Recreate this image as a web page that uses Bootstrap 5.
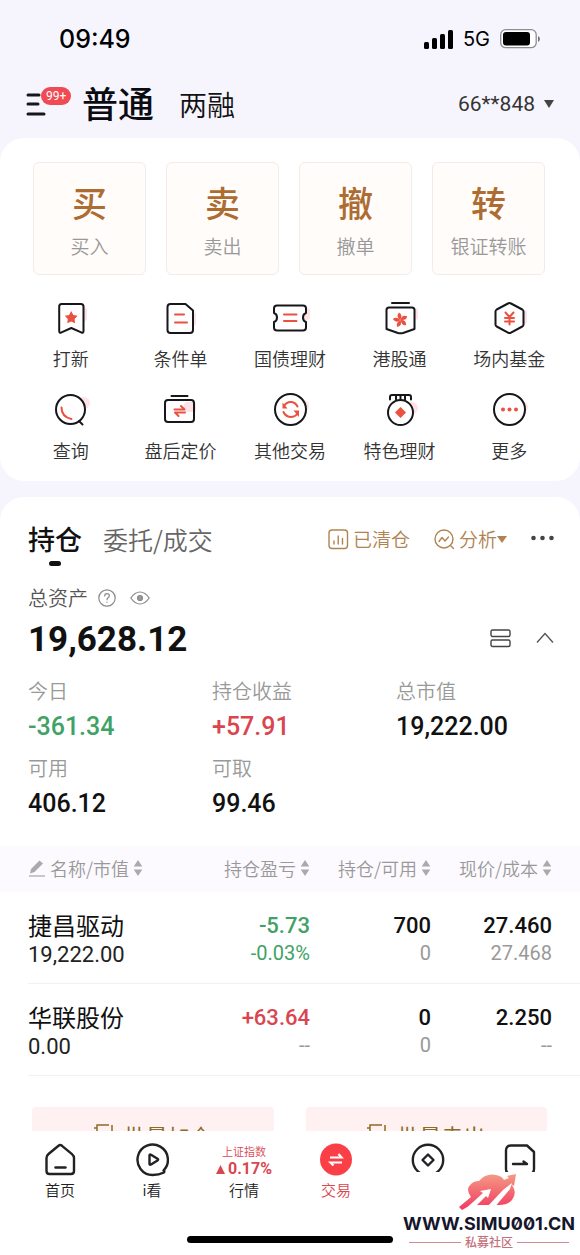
<!DOCTYPE html>
<html lang="zh-CN">
<head>
<meta charset="utf-8">
<meta name="viewport" content="width=device-width, initial-scale=1">
<title>交易</title>
<link href="https://cdn.jsdelivr.net/npm/bootstrap@5.3.0/dist/css/bootstrap.min.css" rel="stylesheet">
<style>
  :root { --cjk: "Noto Sans CJK SC", sans-serif; --num: Roboto, "Noto Sans CJK SC", sans-serif; }
  body { font-family: var(--cjk); font-weight: 350; color: #111; background: #f6f5fe; }
  button, a { color: inherit; text-decoration: none; }
  button { background: none; border: 0; padding: 0; font-weight: inherit; }
  svg { display: block; flex: none; }
  .num { font-family: var(--num); font-weight: 500; }
  .up { color: #d9464f; }
  .down { color: #3fa266; }
  .faint { color: #999; }
  .gold { color: #b08452; }

  /* status bar and account switcher */
  .status { height: 78px; padding: 0 40px 0 59px; font-family: Inter, sans-serif; font-weight: 500; color: #000; }
  .clock { font-size: 25px; line-height: 32px; }
  .net { font-size: 20px; line-height: 32px; font-weight: 400; margin: 0 10px 0 9px; }
  .switcher { height: 60px; padding: 0 26px 8px; }
  .menu { width: 46px; height: 26px; }
  .menu path { stroke-width: 3; }
  .count { top: -4px; left: 15px; height: 18px; line-height: 18px; font-family: Roboto, sans-serif; font-size: 12px; font-weight: 400; padding: 0 5px; border-radius: 9px; background: #f04a54; color: #fff; }
  .mode-on { font-size: 36px; line-height: 44px; font-weight: 500; margin-left: 10px; padding-bottom: 4px; color: #0b0b12; }
  .mode-off { font-size: 28px; line-height: 48px; font-weight: 350; margin-left: 25px; }
  .account { font-size: 21px; line-height: 28px; font-weight: 400; color: #333; gap: 9px; }

  /* shortcuts */
  .panel { background: #fff; border-radius: 24px; }
  .shortcuts { padding: 24px 0 15px; }
  .tiles { display: grid; grid-template-columns: repeat(4, 1fr); gap: 20px; padding: 0 35px 0 33px; }
  .tile { height: 113px; border: 1px solid #f1ece9; border-radius: 6px; background: #fffcfa; }
  .tile-mark { font-size: 35px; line-height: 48px; font-weight: 500; color: #ad6c32; padding-bottom: 6px; }
  .tile-name { font-size: 19px; line-height: 28px; color: #999; }
  .tools { display: grid; grid-template-columns: repeat(5, 1fr); row-gap: 18px; padding: 25px 16px 0; }
  .tool { font-size: 18px; line-height: 26px; color: #333; gap: 7px; height: 74px; white-space: nowrap; }
  .ink { fill: #fff; stroke: #17171b; stroke-width: 2; stroke-linejoin: round; stroke-linecap: round; }
  .line { fill: none; stroke: #17171b; stroke-width: 2; stroke-linejoin: round; stroke-linecap: round; }
  .hot { fill: none; stroke: #ea5140; stroke-width: 2; stroke-linecap: round; stroke-linejoin: round; }
  .hotfill { fill: #ea5140; }
  .glow { fill: #fde3e6; }

  /* holdings */
  .holdings { margin-top: 16px; padding-top: 22px; border-radius: 24px 24px 0 0; }
  .pad { padding-left: 28px; padding-right: 25px; }
  .tab-on { font-size: 27px; line-height: 40px; font-weight: 500; }
  .tab-on::after { content: ""; display: block; width: 12px; height: 5px; margin: 2px auto 0; border-radius: 3px; background: #111; }
  .tab-off { font-size: 25px; line-height: 40px; color: #666; margin-left: 21px; }
  .act { font-size: 19px; line-height: 40px; gap: 4px; }
  .total-label { font-size: 20px; line-height: 28px; margin-top: 18px; color: #555; gap: 10px; }
  .total { font-size: 35px; line-height: 40px; font-weight: 700; }
  .fold { padding-bottom: 5px; }
  .metrics { display: grid; grid-template-columns: repeat(3, 1fr); row-gap: 9px; margin: 17px 0 24px; padding-left: 28px; }
  .metrics dt { font-size: 20px; line-height: 28px; font-weight: 350; color: #999; }
  .metrics dd { font-size: 25px; line-height: 36px; margin: 4px 0 0; }
  .book { table-layout: fixed; }
  .book thead { background: #fcf9ff; }
  .book th { height: 46px; padding: 0 0 2px; font-size: 18px; line-height: 26px; font-weight: 350; color: #999; white-space: nowrap; }
  .book td { padding: 20px 0 13px; vertical-align: top; text-align: right; border-bottom: 1px solid #f1f1f3; }
  .book .edge { width: 28px; border: 0; }
  .book .rim { width: 28px; }
  .book .c-pl { width: 126px; }
  .book .c-qty { width: 121px; }
  .name { font-size: 24px; line-height: 26px; font-weight: 400; margin-bottom: 2px; }
  .worth { font-size: 22px; line-height: 30px; font-weight: 400; color: #222; }
  .main-v { font-size: 22px; line-height: 28px; }
  .sub-v { font-size: 20px; line-height: 26px; font-weight: 400; }
  .bulk { display: grid; grid-template-columns: 1fr 1fr; gap: 32px; padding: 31px 33px 0 32px; }
  .bulk button { height: 64px; font-size: 22px; line-height: 30px; font-weight: 400; border-radius: 4px; background: #fff0f2; color: #8c6b26; gap: 10px; padding-bottom: 8px; }

  /* bottom bar */
  .dock { background: #fff; padding: 12px 14px; height: 124px; }
  .dock-item { flex: 1 1 0; font-size: 15px; line-height: 20px; color: #222; gap: 3px; }
  .dock-item.up { color: #d9464f; }
  .index { height: 34px; }
  .index-name { font-size: 11px; line-height: 16px; }
  .index-move { font-size: 16px; line-height: 20px; font-weight: 700; gap: 3px; }
  .d { fill: none; stroke: #222226; stroke-width: 2.4; stroke-linejoin: round; stroke-linecap: round; }
  .homebar { width: 206px; height: 7px; border-radius: 4px; background: #000; margin: 36px auto 0; }
  .stamp { right: 0; bottom: 0; width: 182px; height: 83px; background: #fff; }
  .stamp-url { font-family: Inter, sans-serif; font-weight: 700; font-size: 18px; line-height: 20px; color: #15152c; font-variant-numeric: slashed-zero; }
  .stamp-sub { font-size: 12px; line-height: 16px; font-weight: 500; color: #c4717c; gap: 4px; width: 160px; }
  .stamp-sub::before, .stamp-sub::after { content: ""; flex: 1; height: 1px; background: #d08a92; }
</style>
</head>
<body>
<svg width="0" height="0" class="position-absolute" aria-hidden="true">
  <symbol id="sort" viewBox="0 0 10 18"><path d="M5 1 9.300 7.500H.7zM5 17 .7 10.500h8.600z" fill="#aaa"/></symbol>
</svg>
<div class="vh-100 d-flex flex-column overflow-hidden">

  <div class="status d-flex align-items-center justify-content-between flex-shrink-0">
    <span class="clock">09:49</span>
    <span class="d-flex align-items-center">
      <svg width="30" height="19" viewBox="0 0 30 19"><rect x="0" y="12" width="5" height="7" rx="1.500"/><rect x="8" y="8" width="5" height="11" rx="1.500"/><rect x="16" y="4" width="5" height="15" rx="1.500"/><rect x="24" y="0" width="5" height="19" rx="1.500"/></svg>
      <span class="net">5G</span>
      <svg width="40" height="20" viewBox="0 0 40 20"><rect x=".7" y=".7" width="35.500" height="18" rx="5" fill="#fff" stroke="#8d8d95" stroke-width="1.300"/><rect x="3" y="3" width="27" height="13.500" rx="3"/><path d="M38 7v6q2-1 2-3t-2-3" fill="#777"/></svg>
    </span>
  </div>

  <header class="switcher d-flex align-items-center flex-shrink-0">
    <button class="menu position-relative" aria-label="菜单">
      <svg width="20" height="26" viewBox="0 0 20 26"><path class="line" d="M2 4h11M2 13h10M2 23h16"/></svg>
      <span class="count position-absolute">99+</span>
    </button>
    <button class="mode-on">普通</button>
    <button class="mode-off">两融</button>
    <button class="account num d-flex align-items-center ms-auto">66**848
      <svg width="10" height="8" viewBox="0 0 10 8"><path d="M0 0h10L5 8z" fill="#444"/></svg>
    </button>
  </header>

  <main class="flex-grow-1 overflow-hidden">
    <section class="panel shortcuts">
      <div class="tiles">
        <button class="tile d-flex flex-column align-items-center justify-content-center"><span class="tile-mark">买</span><span class="tile-name">买入</span></button>
        <button class="tile d-flex flex-column align-items-center justify-content-center"><span class="tile-mark">卖</span><span class="tile-name">卖出</span></button>
        <button class="tile d-flex flex-column align-items-center justify-content-center"><span class="tile-mark">撤</span><span class="tile-name">撤单</span></button>
        <button class="tile d-flex flex-column align-items-center justify-content-center"><span class="tile-mark">转</span><span class="tile-name">银证转账</span></button>
      </div>
      <nav class="tools">
        <a href="#" class="tool d-flex flex-column align-items-center">
          <svg width="40" height="38" viewBox="0 0 40 38"><rect class="glow" x="28" y="7" width="8" height="14" rx="3"/><path class="ink" d="M10.500 4h19.500q2.500 0 2.500 2.500v24.500q0 2.500-2.300 1.300L20.300 28l-9.800 4.300q-2.300 1.200-2.300-1.300V6.500Q8.200 4 10.500 4z"/><path class="hotfill" d="m20.200 11 2.100 3.900 4.300.8-3 3.200.5 4.400-3.900-1.900-3.900 1.900.5-4.400-3-3.200 4.300-.8z"/></svg>打新</a>
        <a href="#" class="tool d-flex flex-column align-items-center">
          <svg width="40" height="38" viewBox="0 0 40 38"><rect class="glow" x="28" y="12" width="8" height="14" rx="3"/><path class="ink" d="M10.500 4h15L33 10.500V30q0 3-3 3H10.500q-3 0-3-3V7q0-3 3-3z"/><path class="hot" d="M15 14.500h9M15 22.500h12"/></svg>条件单</a>
        <a href="#" class="tool d-flex flex-column align-items-center">
          <svg width="42" height="38" viewBox="0 0 42 38"><rect class="glow" x="33" y="8" width="8" height="12" rx="3"/><path class="ink" d="M8 5.500h26q3 0 3 3V13q-3 1-3 4.500t3 4.500v5.500q0 3-3 3H8q-3 0-3-3V22q3-1 3-4.500T5 13V8.500q0-3 3-3z"/><path class="hot" d="M15 14.500h12.500M15 21h12.500"/></svg>国债理财</a>
        <a href="#" class="tool d-flex flex-column align-items-center">
          <svg width="40" height="38" viewBox="0 0 40 38"><rect class="glow" x="28" y="8" width="10" height="12" rx="3"/><path class="ink" d="M9 7.500h23q2.500 0 2.500 2.500v19L23 33q-2.500.7-5 0L6.500 29V10Q6.500 7.500 9 7.500z"/><path class="line" d="M12 3h17"/><g fill="#ea5140"><path id="pt" d="M20.500 20q-5-3-1.500-7.500 4 2 1.500 7.500z"/><use href="#pt" transform="rotate(72 20.500 20)"/><use href="#pt" transform="rotate(144 20.500 20)"/><use href="#pt" transform="rotate(216 20.500 20)"/><use href="#pt" transform="rotate(288 20.500 20)"/></g></svg>港股通</a>
        <a href="#" class="tool d-flex flex-column align-items-center">
          <svg width="40" height="38" viewBox="0 0 40 38"><rect class="glow" x="30" y="10" width="8" height="14" rx="3"/><path class="ink" d="m22 3.500 11.300 6q1.200.7 1.200 2v13q0 1.300-1.200 2L22 32.700q-1.500.8-3 0L7.700 26.500q-1.200-.7-1.200-2v-13q0-1.300 1.200-2l11.300-6q1.500-.8 3 0z"/><path class="hot" d="m16.500 12.500 4 4.500 4-4.500M20.500 17v7.500M16 18h9M16 21.500h9"/></svg>场内基金</a>
        <a href="#" class="tool d-flex flex-column align-items-center">
          <svg width="40" height="38" viewBox="0 0 40 38"><circle class="glow" cx="33" cy="11" r="6"/><circle class="ink" cx="19.500" cy="17.500" r="14.500"/><path class="line" d="m28 29 3.500 3.500"/><path class="hot" d="M10.500 15.500q0 9.500 10 11.500"/></svg>查询</a>
        <a href="#" class="tool d-flex flex-column align-items-center">
          <svg width="40" height="38" viewBox="0 0 40 38"><rect class="glow" x="24" y="10" width="12" height="10" rx="3"/><rect class="line" x="5" y="8" width="29" height="22" rx="3"/><path class="line" d="M11.500 4h16"/><path class="hot" d="M14.500 17.500h10l-3.500-3.500M25 20.500H15l3.500 3.500"/></svg>盘后定价</a>
        <a href="#" class="tool d-flex flex-column align-items-center">
          <svg width="40" height="38" viewBox="0 0 40 38"><circle class="glow" cx="33" cy="14" r="6"/><circle class="ink" cx="20.500" cy="17.500" r="15.500"/><path class="hot" d="M14 14q2.500-4.500 7.500-4 4 .5 6 4.500M13.500 20q2 4.500 7 5 5 0 7.500-4"/><path class="hotfill" d="M12.500 10.500v6h5zM29 25v-6.500h-5.500z"/></svg>其他交易</a>
        <a href="#" class="tool d-flex flex-column align-items-center">
          <svg width="40" height="38" viewBox="0 0 40 38"><circle class="glow" cx="32" cy="16" r="6"/><path class="line" d="M10 7.500V5q0-2 2-2h17q2 0 2 2v2.500M16 3v4.500M20.500 3v4M25 3v4.500"/><circle class="ink" cx="20.500" cy="20.500" r="12.500"/><path class="hotfill" d="m20.500 15 5.500 5.500-5.500 5.500-5.500-5.500z"/></svg>特色理财</a>
        <a href="#" class="tool d-flex flex-column align-items-center">
          <svg width="40" height="38" viewBox="0 0 40 38"><circle class="glow" cx="33" cy="15" r="6"/><circle class="ink" cx="20.500" cy="17.500" r="15.500"/><g class="hotfill"><circle cx="14" cy="17.500" r="2"/><circle cx="20.500" cy="17.500" r="2"/><circle cx="27" cy="17.500" r="2"/></g></svg>更多</a>
      </nav>
    </section>

    <section class="panel holdings">
      <div class="pad d-flex align-items-start">
        <button class="tab-on">持仓</button>
        <button class="tab-off">委托/成交</button>
        <button class="act gold d-flex align-items-center ms-auto"><svg width="21" height="21" viewBox="0 0 21 21" fill="none" stroke="currentColor" stroke-width="1.400" stroke-linecap="round"><rect x="1" y="1" width="18.500" height="18.500" rx="3"/><path d="M6 12v3M10.200 7v8M14.500 9.500V15"/></svg>已清仓</button>
        <button class="act gold d-flex align-items-center ms-4"><svg width="21" height="21" viewBox="0 0 21 21" fill="none" stroke="currentColor" stroke-width="1.400" stroke-linecap="round" stroke-linejoin="round"><circle cx="10" cy="10" r="9"/><path d="m16.500 16.500 3 3M5 12.500l3-4 3 3.500L14.500 8"/></svg><span class="d-flex align-items-center">分析<svg width="10" height="7" viewBox="0 0 10 7"><path d="M0 0h10L5 7z" fill="currentColor"/></svg></span></button>
        <button class="act ms-4" aria-label="更多"><svg width="24" height="40" viewBox="0 0 24 40" fill="#444"><circle cx="2.500" cy="19" r="2.300"/><circle cx="11.500" cy="19" r="2.300"/><circle cx="20.500" cy="19" r="2.300"/></svg></button>
      </div>

      <div class="pad total-label d-flex align-items-center">总资产
        <svg width="18" height="18" viewBox="0 0 18 18" fill="none" stroke="#888" stroke-width="1.200" stroke-linecap="round"><circle cx="9" cy="9" r="8.200"/><path d="M6.700 7q0-2.300 2.300-2.300t2.300 2q0 1.300-1.300 2Q9 9.500 9 10.700M9 13.200v.1"/></svg>
        <svg width="20" height="18" viewBox="0 0 20 18" fill="none" stroke="#888" stroke-width="1.200" class="ms-1"><path d="M.8 9Q5 3 10 3t9.200 6Q15 15 10 15T.8 9z"/><circle cx="10" cy="9" r="2.500" fill="#999"/></svg>
      </div>
      <div class="pad d-flex align-items-center mt-2">
        <span class="total num">19,628.12</span>
        <button class="fold ms-auto" aria-label="列表样式"><svg width="21" height="20" viewBox="0 0 21 20" fill="none" stroke="#444" stroke-width="1.400"><rect x="1" y="2" width="19" height="6.500" rx="1.500"/><rect x="1" y="12" width="19" height="6.500" rx="1.500"/></svg></button>
        <button class="fold ms-4" aria-label="收起"><svg width="20" height="20" viewBox="0 0 20 20" fill="none" stroke="#555" stroke-width="1.400"><path d="m2 14.500 8-9 8 9"/></svg></button>
      </div>

      <dl class="metrics">
        <div><dt>今日</dt><dd class="num down">-361.34</dd></div>
        <div><dt>持仓收益</dt><dd class="num up">+57.91</dd></div>
        <div><dt>总市值</dt><dd class="num">19,222.00</dd></div>
        <div><dt>可用</dt><dd class="num">406.12</dd></div>
        <div><dt>可取</dt><dd class="num">99.46</dd></div>
      </dl>

      <table class="book w-100">
        <colgroup><col class="edge"><col><col class="c-pl"><col class="c-qty"><col class="c-qty"><col class="rim"></colgroup>
        <thead>
          <tr>
            <th></th>
            <th scope="col"><span class="d-flex align-items-center"><svg width="18" height="18" viewBox="0 0 18 18" class="me-1"><path d="M2 14.500 3 10l8.500-8.500 3.500 3L6.500 13z" fill="#aaa"/><path d="M1 17h16" stroke="#aaa" stroke-width="1.300"/></svg>名称/市值<svg width="10" height="18" class="ms-1"><use href="#sort"/></svg></span></th>
            <th scope="col"><span class="d-flex align-items-center justify-content-end">持仓盈亏<svg width="10" height="18" class="ms-1"><use href="#sort"/></svg></span></th>
            <th scope="col"><span class="d-flex align-items-center justify-content-end">持仓/可用<svg width="10" height="18" class="ms-1"><use href="#sort"/></svg></span></th>
            <th scope="col"><span class="d-flex align-items-center justify-content-end">现价/成本<svg width="10" height="18" class="ms-1"><use href="#sort"/></svg></span></th>
            <th></th>
          </tr>
        </thead>
        <tbody>
          <tr>
            <td class="edge"></td>
            <td class="text-start"><div class="name">捷昌驱动</div><div class="worth num">19,222.00</div></td>
            <td class="num down"><div class="main-v">-5.73</div><div class="sub-v">-0.03%</div></td>
            <td class="num"><div class="main-v">700</div><div class="sub-v faint">0</div></td>
            <td class="num"><div class="main-v">27.460</div><div class="sub-v faint">27.468</div></td>
            <td></td>
          </tr>
          <tr>
            <td class="edge"></td>
            <td class="text-start"><div class="name">华联股份</div><div class="worth num">0.00</div></td>
            <td class="num up"><div class="main-v">+63.64</div><div class="sub-v faint">--</div></td>
            <td class="num"><div class="main-v">0</div><div class="sub-v faint">0</div></td>
            <td class="num"><div class="main-v">2.250</div><div class="sub-v faint">--</div></td>
            <td></td>
          </tr>
        </tbody>
      </table>

      <div class="bulk">
        <button class="d-flex align-items-center justify-content-center"><svg width="20" height="24" viewBox="0 0 20 24" fill="none" stroke="currentColor" stroke-width="1.500"><path d="M3 22V2h12M18 2v20H3M0 5h3"/></svg>批量加仓</button>
        <button class="d-flex align-items-center justify-content-center"><svg width="20" height="24" viewBox="0 0 20 24" fill="none" stroke="currentColor" stroke-width="1.500"><path d="M3 22V2h12M18 2v20H3M0 5h3"/></svg>批量卖出</button>
      </div>
    </section>
  </main>

  <footer class="dock position-relative flex-shrink-0">
    <nav class="d-flex align-items-start">
      <a href="#" class="dock-item d-flex flex-column align-items-center"><svg width="34" height="34" viewBox="0 0 34 34"><path class="d" d="m19 2.800 10 8.300q2 1.700 2 4V28q0 3-3 3H6.500q-3 0-3-3V15q0-2.300 2-4l10-8.200q1.700-1.400 3.500 0z"/><path class="d" d="M12.500 24.500h10"/></svg>首页</a>
      <a href="#" class="dock-item d-flex flex-column align-items-center"><svg width="34" height="34" viewBox="0 0 34 34"><path class="d" d="M29 29.500Q24 32 17.500 32A15.200 15.200 0 1 1 28.500 27.500q1.500 0 .5 2z"/><path class="d" d="M14.500 12.500q0-1.500 1.500-.7l6.500 4q1.300.8 0 1.600l-6.500 4q-1.500.8-1.500-.7z"/></svg>i看</a>
      <a href="#" class="dock-item d-flex flex-column align-items-center"><span class="index text-center text-nowrap"><span class="index-name up d-block">上证指数</span><span class="index-move up num d-flex align-items-center"><svg width="9" height="9" viewBox="0 0 9 9"><path d="M4.500 0 9 9H0z" fill="currentColor"/></svg>0.17%</span></span>行情</a>
      <a href="#" class="dock-item up d-flex flex-column align-items-center"><svg width="34" height="34" viewBox="0 0 34 34"><circle cx="17" cy="16.500" r="16" fill="#fa4046"/><path d="M11 14.500h11.500l-3-3.500M23 19.500H11.500l3 3" fill="none" stroke="#fff" stroke-width="2.200"/></svg>交易</a>
      <a href="#" class="dock-item d-flex flex-column align-items-center" aria-label="理财"><svg width="34" height="34" viewBox="0 0 34 34"><circle class="d" cx="17" cy="17" r="15.200"/><path class="d" d="m17 11.500 5.500 5.500-5.500 5.500-5.500-5.500z"/></svg></a>
      <a href="#" class="dock-item d-flex flex-column align-items-center" aria-label="我的"><svg width="34" height="34" viewBox="0 0 34 34"><path class="d" d="M8 2.500h16l7 6.500v17q0 5-5 5H8q-5 0-5-5V7.500q0-5 5-5z"/><path class="d" d="M10 21h14l-3.500-2.500"/></svg></a>
    </nav>
    <div class="homebar"></div>
    <div class="stamp position-absolute d-flex flex-column align-items-center">
      <svg width="60" height="42" viewBox="0 0 60 42">
        <defs><linearGradient id="rise" x1="0" y1="0" x2="0" y2="1"><stop offset="0" stop-color="#f49a84"/><stop offset="1" stop-color="#f23a60"/></linearGradient></defs>
        <path fill="url(#rise)" d="M0 35l12-10Q6 17 12 12q3-3 8-3 7-8 17-6 6 1 8 5l5-2-2-2 9-2-2 12-3-2q7 8 1 16-4 5-13 5H12l-9 5z"/>
        <path fill="#fff" d="M3 40 24 21l-3-2 11-2-3 9-2-2-13 13v4z"/>
        <path fill="#fff" d="m27 36 17-18 9-7-2 6-16 19z"/>
      </svg>
      <div class="stamp-url">WWW.SIMU001.CN</div>
      <div class="stamp-sub d-flex align-items-center">私募社区</div>
    </div>
  </footer>
</div>
<script src="https://cdn.jsdelivr.net/npm/bootstrap@5.3.0/dist/js/bootstrap.bundle.min.js"></script>
</body>
</html>
